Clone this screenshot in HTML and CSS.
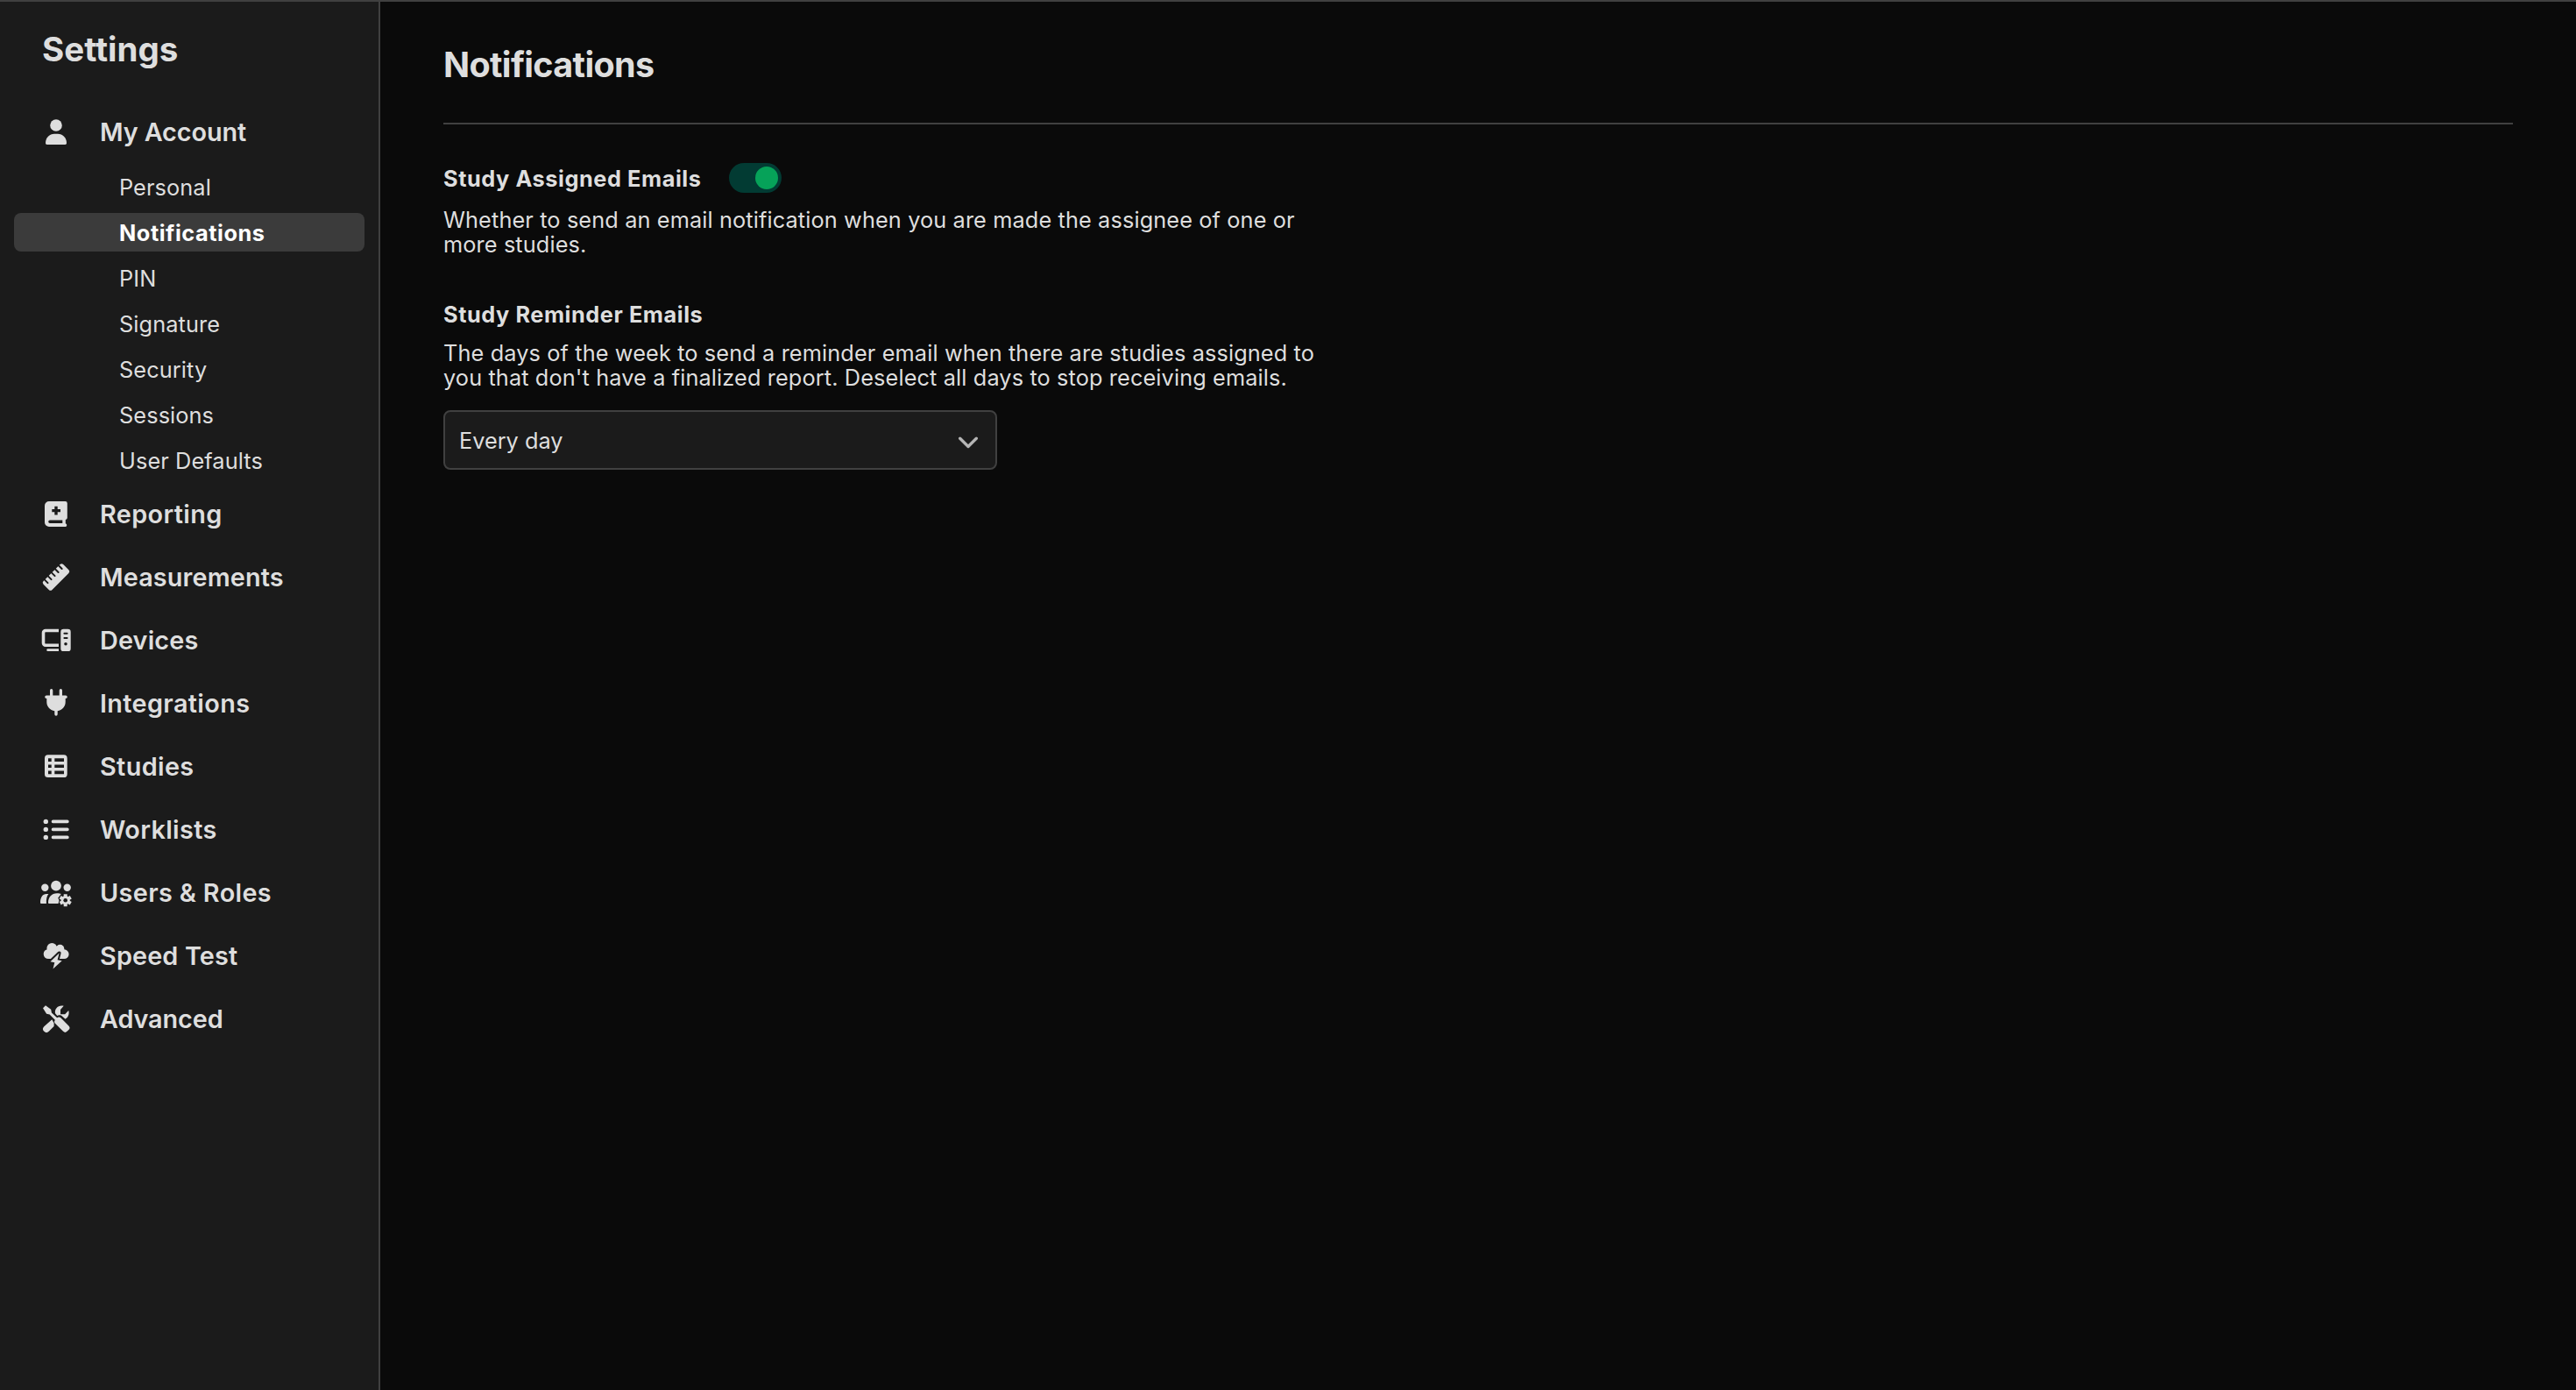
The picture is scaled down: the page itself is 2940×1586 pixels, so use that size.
FILE: index.html
```
<!DOCTYPE html>
<html lang="en">
<head>
  <meta charset="UTF-8">
  <meta name="viewport" content="width=device-width, initial-scale=1.0">
  <title>Settings</title>
  <link rel="stylesheet" href="styles.css">
</head>
<body>
  <aside class="sidebar">
    <h1>Settings</h1>
    <nav>
      <a class="group tight" href="#account">
        <svg class="icon" viewBox="0 0 40 40"><circle cx="20" cy="12" r="6.8"/><path d="M8 32.3C8 26 12.5 21.8 18 21.8h4c5.5 0 10 4.2 10 10.5 0 1-.7 1.7-1.7 1.7H9.7C8.7 34 8 33.3 8 32.3z"/></svg>
        <span>My Account</span>
      </a>
      <ul class="sub">
        <li><a href="#personal">Personal</a></li>
        <li><a class="active" href="#notifications">Notifications</a></li>
        <li><a href="#pin">PIN</a></li>
        <li><a href="#signature">Signature</a></li>
        <li><a href="#security">Security</a></li>
        <li><a href="#sessions">Sessions</a></li>
        <li><a href="#defaults">User Defaults</a></li>
      </ul>
      <a class="group" href="#reporting">
        <svg class="icon" viewBox="0 0 40 40"><path fill-rule="evenodd" d="M12 5h18.5a2.3 2.3 0 0 1 2.3 2.3v16.5a2.3 2.3 0 0 1-2 2.3v4.2a1.9 1.9 0 0 1 0 3.7H12a5 5 0 0 1-5-5V10a5 5 0 0 1 5-5zM13 26.4a1.8 1.8 0 0 0 0 3.6h14.3v-3.6zM18.3 10.8v3.1h-3v3.4h3v3.2h3.4v-3.2h3.3v-3.4h-3.3v-3.1z"/></svg>
        <span>Reporting</span>
      </a>
      <a class="group medium" href="#measurements">
        <svg class="icon" viewBox="0 0 40 40"><g transform="translate(20 19.5) rotate(-45)"><rect x="-16" y="-7" width="32" height="14" rx="2.6"/><path class="cut" d="M-11.4-8v6M-5.7-8v6M0-8v6M5.7-8v6M11.4-8v6"/></g></svg>
        <span>Measurements</span>
      </a>
      <a class="group medium" href="#devices">
        <svg class="icon" viewBox="0 0 40 40"><path class="line" d="M23 8.5H7.9a2.4 2.4 0 0 0-2.4 2.4v11.9a2.4 2.4 0 0 0 2.4 2.4H23"/><path d="M10.6 29.3H23V32H10.6a1.35 1.35 0 0 1 0-2.7z"/><rect x="25.3" y="6.7" width="11.4" height="25.4" rx="3.2"/><path class="cut" d="M29.4 11.8h3.2M29.4 17h3.2"/><circle class="hole" cx="31" cy="23.7" r="1.8"/></svg>
        <span>Devices</span>
      </a>
      <a class="group" href="#integrations">
        <svg class="icon" viewBox="0 0 40 40"><path d="M13 12V4.7a1.6 1.6 0 0 1 3.3 0v5.7h7.4V4.7a1.6 1.6 0 0 1 3.3 0v5.7h4a1.8 1.8 0 0 1 0 3.6h-.3v4c0 5.300-3.800 9.400-9 10.300V32a1.7 1.7 0 0 1-3.400 0v-3.700c-5.200-.9-9-5-9-10.300v-4H9a1.8 1.8 0 0 1 0-3.600h4z"/></svg>
        <span>Integrations</span>
      </a>
      <a class="group" href="#studies">
        <svg class="icon" viewBox="0 0 40 40"><path fill-rule="evenodd" d="M10.800 6.300h18a3.900 3.900 0 0 1 3.900 3.900v18a3.900 3.900 0 0 1-3.900 3.900h-18A3.900 3.900 0 0 1 7 28.200v-18a3.900 3.900 0 0 1 3.800-3.900zM11 10.300V14h3.700v-3.700zM18.300 10.300V14H29v-3.700zM11 17.400V21h3.700v-3.600zM18.300 17.400V21H29v-3.600zM11 24.600v3.700h3.700v-3.700zM18.300 24.600v3.700H29v-3.700z"/></svg>
        <span>Studies</span>
      </a>
      <a class="group" href="#worklists">
        <svg class="icon" viewBox="0 0 40 40"><circle cx="8.3" cy="10.4" r="2.7"/><circle cx="8.3" cy="19.4" r="2.7"/><circle cx="8.3" cy="28.4" r="2.7"/><path class="line round" d="M16.5 10.4h16.4M16.5 19.4h16.4M16.5 28.4h16.4"/></svg>
        <span>Worklists</span>
      </a>
      <a class="group" href="#users">
        <svg class="icon" viewBox="0 0 40 40"><circle cx="20" cy="11.7" r="5.9"/><circle cx="7.3" cy="13.8" r="4.2"/><circle cx="32.7" cy="13.8" r="4.2"/><path d="M2 31c0-6 2.500-10 7-10h2.400C9.300 23.500 8.700 27 8.900 32H3a1 1 0 0 1-1-1zM11 31c0-6.300 4-10.800 10-10.800 2 0 4 .2 4.800.8L22.300 25.500l1.200 3-1 3.500H12a1 1 0 0 1-1-1z"/><circle cx="30.7" cy="28.3" r="5"/><path class="teeth" d="M30.700 21.300v14M24.640 24.800l12.120 7M24.640 31.800l12.120-7"/><circle class="hole" cx="30.7" cy="28.3" r="2.3"/></svg>
        <span>Users &amp; Roles</span>
      </a>
      <a class="group medium" href="#speed">
        <svg class="icon" viewBox="0 0 40 40"><circle cx="15.3" cy="10.9" r="5.9"/><circle cx="24.5" cy="11.6" r="4.8"/><circle cx="11.2" cy="17.5" r="5.5"/><circle cx="29.2" cy="17.7" r="5.4"/><path d="M11.200 12h18v11h-18z"/><path class="bolt" d="M23.600 16.500L13.500 26.300l4.800.9-1.800 7.300 10.200-9.200-5.100-1z"/><path d="M23.600 16.500L13.500 26.300l4.800.9-1.800 7.300 10.200-9.200-5.100-1z"/></svg>
        <span>Speed Test</span>
      </a>
      <a class="group tight" href="#advanced">
        <svg class="icon" viewBox="0 0 40 40"><path d="M5 7.200L8 4.300l6.200 4.500.7 3.600 7 6.600-2.400 2.400-6.900-6.900-3.500-.7z"/><rect x="-9.5" y="-4.5" width="19" height="9" rx="3.2" transform="translate(26.8 26.2) rotate(45)"/><path d="M28.700 4.800L25 9v5.300h5.200l4-4.200c1.200 3.500-.2 8-3.600 9.600l-4.600-4c-1.800-.6-3.500-.6-4.700.3L19 13.300C18 8 22.500 3.400 28.700 4.800z"/><path d="M15.300 20.300L6.300 28.200a3.900 3.900 0 0 0 5.500 5.600L17.600 28v-3.800z"/></svg>
        <span>Advanced</span>
      </a>
    </nav>
  </aside>

  <main>
    <h2>Notifications</h2>

    <section>
      <div class="setting-head">
        <h3>Study Assigned Emails</h3>
        <div class="toggle"></div>
      </div>
      <p>Whether to send an email notification when you are made the assignee of one or<br>more studies.</p>
    </section>

    <section class="reminders">
      <h3>Study Reminder Emails</h3>
      <p>The days of the week to send a reminder email when there are studies assigned to<br>you that don't have a finalized report. Deselect all days to stop receiving emails.</p>
      <div class="select">
        <span>Every day</span>
        <svg class="chevron" viewBox="0 0 24 16"><path d="M2.700 3.200l9.300 9.300 9.300-9.300"/></svg>
      </div>
    </section>
  </main>
</body>
</html>
```

FILE: styles.css
```
* {
  margin: 0;
  padding: 0;
  box-sizing: border-box;
}

body {
  display: flex;
  min-height: 100vh;
  border-top: 2px solid #404040;
  background-color: #0a0a0a;
  color: #dedede;
  font-family: Inter, "Liberation Sans", sans-serif;
  font-size: 25.3px;
}

a {
  color: inherit;
  text-decoration: none;
}

/* sidebar */
.sidebar {
  width: 434px;
  flex-shrink: 0;
  padding-top: 34px;
  background-color: #1b1b1b;
  border-right: 2px solid #404040;
}

h1 {
  margin: 0 0 39px 48px;
  font-size: 38.5px;
  line-height: 40px;
  font-weight: 700;
}

.group {
  display: flex;
  align-items: center;
  gap: 30px;
  height: 72px;
  padding-left: 44px;
  font-size: 28.8px;
  font-weight: 600;
  letter-spacing: 0.37px;
}

.group.medium {
  letter-spacing: 0.15px;
}

.group.tight {
  letter-spacing: -0.1px;
}

.group span {
  padding-bottom: 2px;
}

.icon {
  width: 40px;
  height: 40px;
  fill: #dedede;
}

.cut {
  fill: none;
  stroke: #1b1b1b;
  stroke-width: 2;
  stroke-linecap: round;
}

.hole {
  fill: #1b1b1b;
}

.line {
  fill: none;
  stroke: #dedede;
  stroke-width: 3.6;
}

.round {
  stroke-linecap: round;
}

.teeth {
  stroke: #dedede;
  stroke-width: 4;
}

.bolt {
  stroke: #1b1b1b;
  stroke-width: 4;
  stroke-linejoin: round;
}

.sub {
  display: flex;
  flex-direction: column;
  gap: 8px;
  padding: 4px 16px;
  list-style: none;
}

.sub a {
  display: block;
  height: 44px;
  padding: 1px 0 0 120px;
  border-radius: 8px;
  line-height: 44px;
  letter-spacing: 0.1px;
}

.sub .active {
  background-color: #3b3b3b;
  color: white;
  font-weight: 700;
  letter-spacing: 0.55px;
}

/* content */
main {
  flex: 1;
  padding: 52px 72px 0;
}

h2 {
  padding-bottom: 46px;
  margin-bottom: 44px;
  border-bottom: 2px solid #404040;
  font-size: 39.5px;
  line-height: 40px;
  font-weight: 700;
  letter-spacing: -0.65px;
}

h3 {
  font-size: 25.3px;
  line-height: 34px;
  font-weight: 700;
  letter-spacing: 0.57px;
}

.setting-head {
  display: flex;
  align-items: center;
  margin-bottom: 17px;
}

.setting-head h3 {
  width: 326px;
  height: 34px;
  padding-top: 1px;
}

.toggle {
  display: flex;
  justify-content: flex-end;
  width: 60px;
  height: 34px;
  padding: 4px;
  border-radius: 17px;
  background-color: #023b33;
}

.toggle::after {
  content: "";
  width: 26px;
  height: 26px;
  border-radius: 50%;
  background-color: #06a259;
}

p {
  line-height: 28px;
  letter-spacing: 0.12px;
  white-space: nowrap;
}

.reminders {
  margin-top: 49px;
}

.reminders h3 {
  margin-bottom: 13px;
}

.select {
  display: flex;
  align-items: center;
  justify-content: space-between;
  width: 632px;
  height: 68px;
  margin-top: 23px;
  padding: 0 19px 0 16px;
  border: 2px solid #404040;
  border-radius: 8px;
  background-color: #1b1b1b;
}

.chevron {
  width: 24px;
  height: 16px;
  margin-top: 5px;
  fill: none;
  stroke: #b5b5b5;
  stroke-width: 3.4;
  stroke-linecap: round;
  stroke-linejoin: round;
}
```
